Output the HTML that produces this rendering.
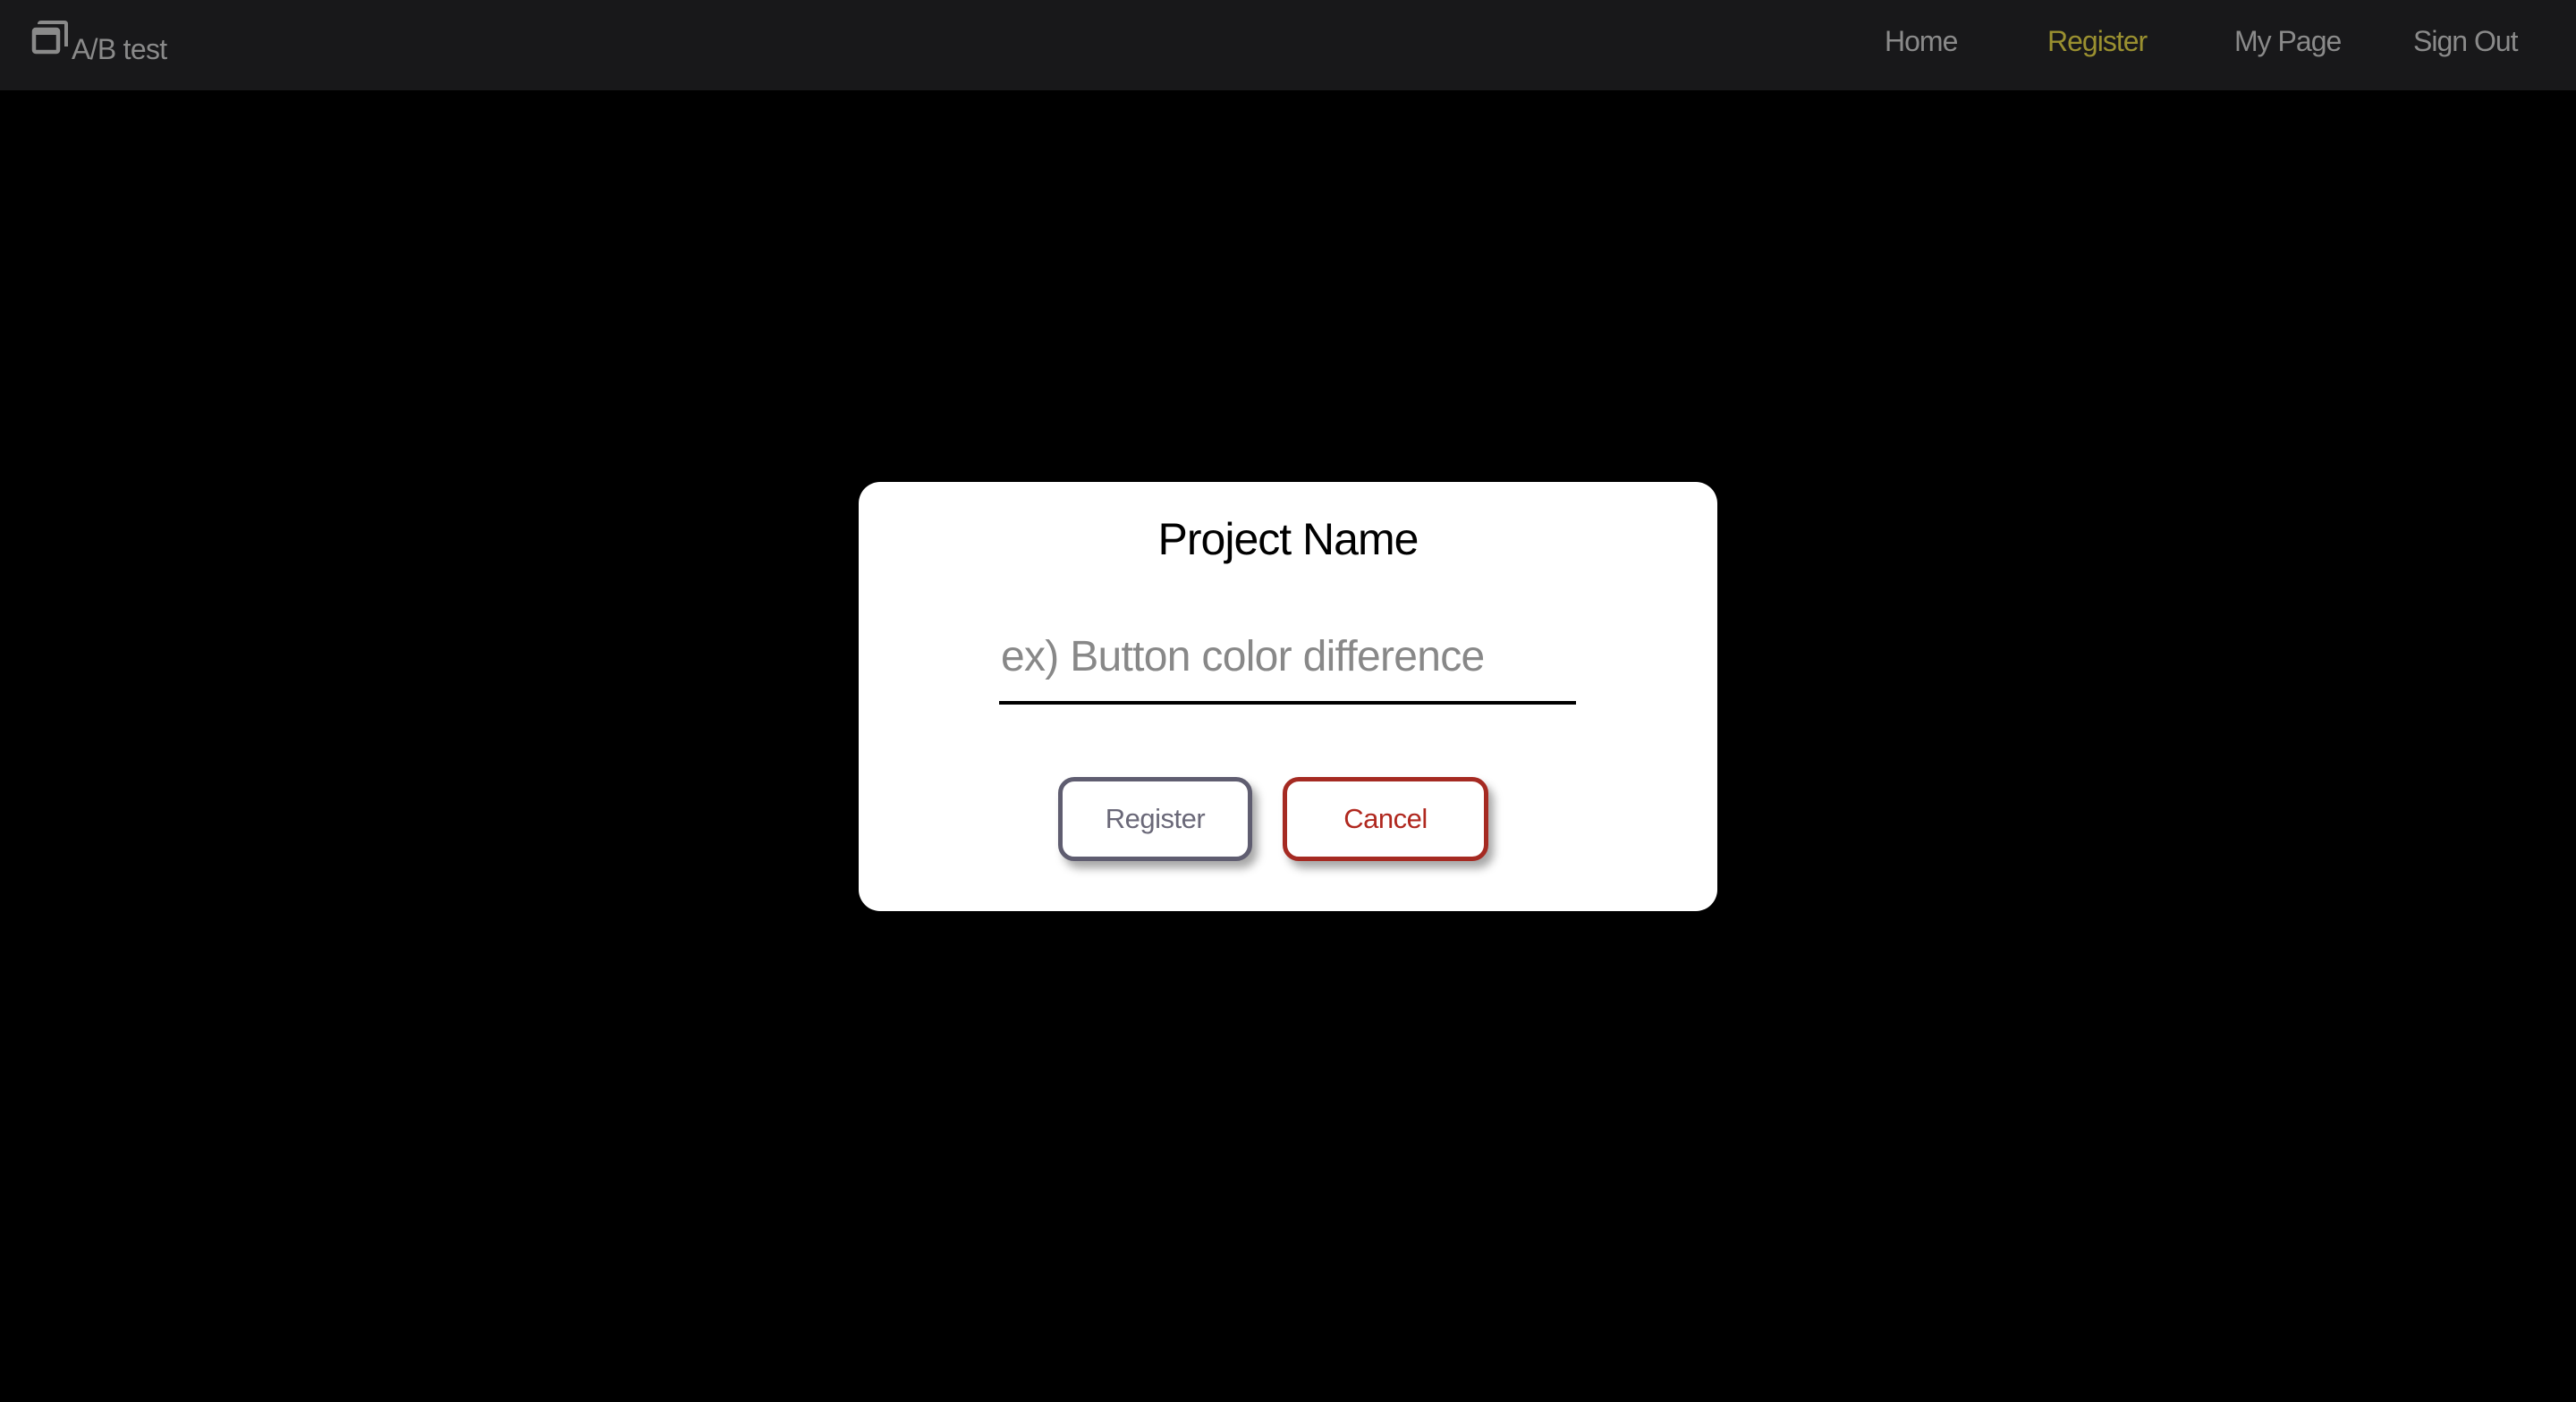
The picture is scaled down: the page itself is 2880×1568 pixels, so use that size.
<!DOCTYPE html>
<html><head><meta charset="utf-8"><style>
html,body{margin:0;padding:0;width:2880px;height:1568px;background:#000;overflow:hidden;font-family:"Liberation Sans",sans-serif;}
.nav{position:absolute;left:0;top:0;width:2880px;height:101px;background:#18181a;}
.t{position:absolute;white-space:nowrap;line-height:1;}
.nav .i{font-size:32px;color:#8a8a8a;top:30px;letter-spacing:-1px;}
.dlg{position:absolute;left:960px;top:539px;width:960px;height:480px;background:#fff;border-radius:24px;}
.btn{position:absolute;top:869px;height:94px;box-sizing:border-box;border:5px solid;border-radius:18px;background:#fff;box-shadow:6px 8px 10px rgba(0,0,0,.35);font-size:31px;display:flex;align-items:center;justify-content:center;letter-spacing:-0.5px;}
</style></head><body>
<div class="nav">
<svg style="position:absolute;left:34px;top:22px" width="44" height="42" viewBox="0 0 44 42">
<path d="M10 5 Q10 3 12 3 H38 Q40 3 40 5 V30" fill="none" stroke="#8a8a8a" stroke-width="4"/>
<rect x="4" y="11" width="27" height="25" rx="2" fill="none" stroke="#8a8a8a" stroke-width="4.5"/>
<rect x="4" y="11" width="27" height="6" fill="#8a8a8a"/>
</svg>
<div class="t" style="left:80px;top:39px;font-size:32px;color:#8a8a8a;letter-spacing:-0.7px">A/B test</div>
<div class="t i" style="left:2107px">Home</div>
<div class="t i" style="left:2289px;color:#9a9030">Register</div>
<div class="t i" style="left:2498px">My Page</div>
<div class="t i" style="left:2698px">Sign Out</div>
</div>
<div class="dlg"></div>
<div class="t" style="left:960px;width:960px;text-align:center;top:578px;font-size:50px;color:#000;letter-spacing:-1px">Project Name</div>
<div class="t" style="left:1119px;top:711px;font-size:48px;color:#888;letter-spacing:-0.7px">ex) Button color difference</div>
<div style="position:absolute;left:1117px;top:784px;width:645px;height:4px;background:#000"></div>
<div class="btn" style="left:1183px;width:217px;border-color:#5f5d70;color:#6a6878">Register</div>
<div class="btn" style="left:1434px;width:230px;border-color:#a52a22;color:#b0281f">Cancel</div>
</body></html>
